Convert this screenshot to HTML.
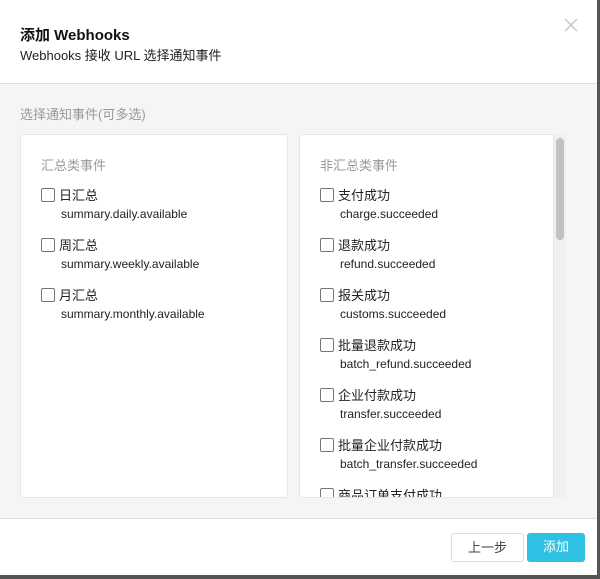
<!DOCTYPE html>
<html><head><meta charset="utf-8"><style>
*{margin:0;padding:0;box-sizing:border-box}
body{width:600px;height:579px;background:#555;font-family:"Liberation Sans","Noto Sans CJK SC",sans-serif;position:relative;overflow:hidden}
.modal{position:absolute;left:0;top:0;width:597px;height:575px;background:#fff}
.t1{position:absolute;left:20px;top:24px;font-size:15px;font-weight:bold;color:#111}
.t2{position:absolute;left:20px;top:45px;font-size:13px;color:#222}
.x{position:absolute;left:564px;top:18px}
.body{position:absolute;left:0;top:83px;width:597px;height:436px;background:#f5f5f5;border-top:1px solid #ddd;border-bottom:1px solid #ddd}
.lbl{position:absolute;left:20px;top:20px;font-size:13px;color:#999}
.panel{position:absolute;top:50px;height:364px;background:#fff;border:1px solid #e6e6e6;border-radius:3px;overflow:hidden}
.h{position:absolute;left:20px;top:20px;font-size:13px;color:#999}
.it{position:absolute;left:20px;font-size:13px;color:#222}
.it .cb{display:inline-block;width:14px;height:14px;border:1px solid #777;border-radius:2px;vertical-align:-2px;margin-right:4px}
.it .c{display:block;margin-left:20px;margin-top:3px;font-size:12px}
.sb{position:absolute;left:553px;top:50px;width:13px;height:364px;background:#f0f0f0;border-left:1px solid #e6e6e6}
.sb div{position:absolute;left:2px;top:4px;width:8px;height:102px;background:#c1c1c1;border-radius:4px}
.btn{position:absolute;top:533px;height:29px;font-size:13px;border-radius:3px;text-align:center;line-height:28px}
</style></head><body><div class="modal">
<div class="t1">添加 Webhooks</div>
<div class="t2">Webhooks 接收 URL 选择通知事件</div>
<svg class="x" width="14" height="14" viewBox="0 0 14 14"><path d="M1 1L13 13M13 1L1 13" stroke="#c4c4c4" stroke-width="1.3"/></svg>
<div class="body">
<div class="lbl">选择通知事件(可多选)</div>
<div class="panel" style="left:20px;width:268px">
<div class="h">汇总类事件</div>
<div class="it" style="top:50px"><span class="cb"></span>日汇总<span class="c">summary.daily.available</span></div>
<div class="it" style="top:100px"><span class="cb"></span>周汇总<span class="c">summary.weekly.available</span></div>
<div class="it" style="top:150px"><span class="cb"></span>月汇总<span class="c">summary.monthly.available</span></div>
</div>
<div class="panel" style="left:299px;width:256px">
<div class="h">非汇总类事件</div>
<div class="it" style="top:50px"><span class="cb"></span>支付成功<span class="c">charge.succeeded</span></div>
<div class="it" style="top:100px"><span class="cb"></span>退款成功<span class="c">refund.succeeded</span></div>
<div class="it" style="top:150px"><span class="cb"></span>报关成功<span class="c">customs.succeeded</span></div>
<div class="it" style="top:200px"><span class="cb"></span>批量退款成功<span class="c">batch_refund.succeeded</span></div>
<div class="it" style="top:250px"><span class="cb"></span>企业付款成功<span class="c">transfer.succeeded</span></div>
<div class="it" style="top:300px"><span class="cb"></span>批量企业付款成功<span class="c">batch_transfer.succeeded</span></div>
<div class="it" style="top:350px"><span class="cb"></span>商品订单支付成功</div>
</div>
<div class="sb"><div></div></div>
</div>
<div class="btn" style="left:451px;width:73px;border:1px solid #ddd;color:#444;background:#fff">上一步</div>
<div class="btn" style="left:527px;width:58px;background:#2ec1e3;color:#fff">添加</div>
</div></body></html>
